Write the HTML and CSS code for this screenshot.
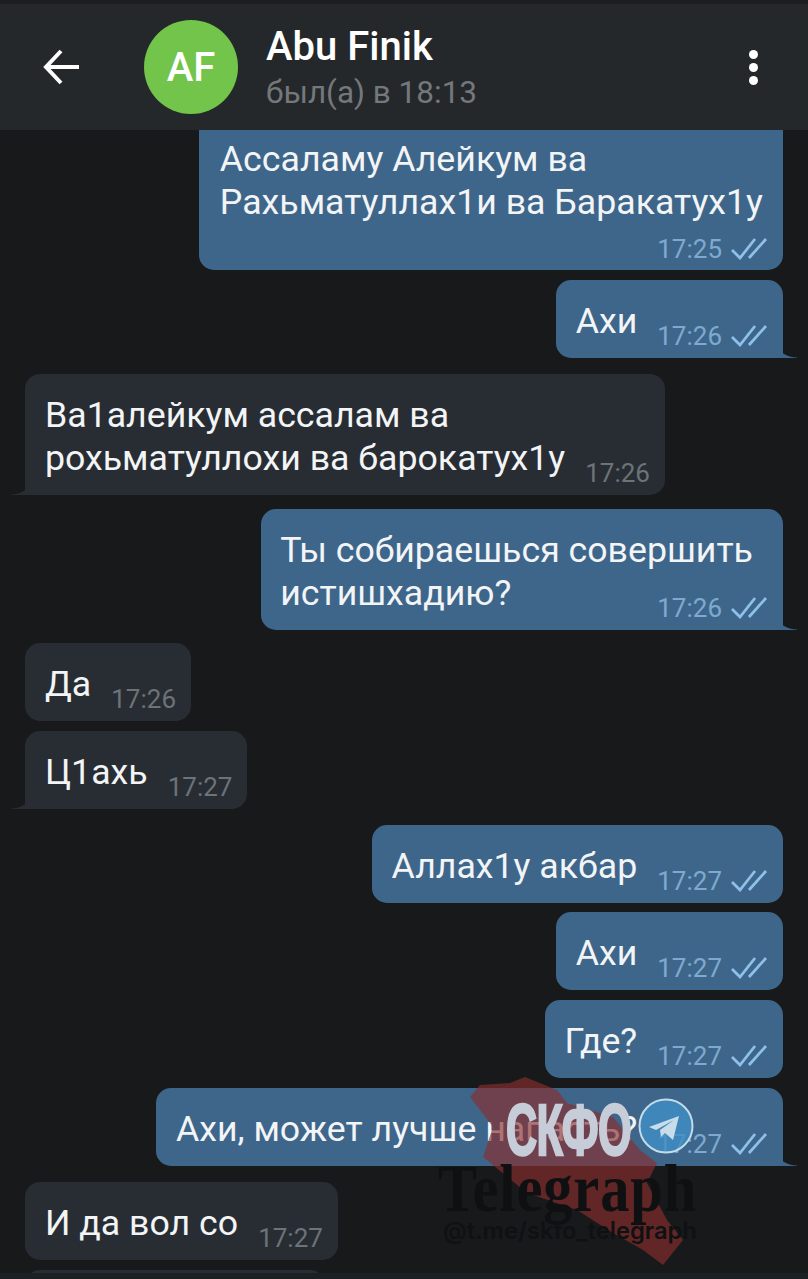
FILE: index.html
```html
<!DOCTYPE html>
<html lang="ru">
<head>
    <meta charset="UTF-8">
    <meta name="viewport" content="width=device-width, initial-scale=1.0">
    <title>Abu Finik</title>
    <link rel="stylesheet" href="styles.css">
</head>
<body>
    <div class="screen">
        <header class="topbar">
            <svg class="back" width="38" height="38" viewBox="0 0 38 38"><path d="M36 19H4M18 3 3 19l15 16" fill="none" stroke="#fff" stroke-width="4"/></svg>
            <div class="avatar">AF</div>
            <div class="peer">
                <div class="peer-name">Abu Finik</div>
                <div class="peer-status">был(а) в 18:13</div>
            </div>
            <div class="more"><span></span><span></span><span></span></div>
        </header>

        <main class="chat">
            <div class="msg out first">
                <div class="bubble bubble-column">
                    <p class="text">Ассаламу Алейкум ва<br>Рахьматуллах1и ва Баракатух1у</p>
                    <div class="meta">17:25 <svg class="ticks"><use href="#ticks"/></svg></div>
                </div>
            </div>
            <div class="msg out near">
                <div class="bubble tail">
                    <p class="text">Ахи</p>
                    <div class="meta">17:26 <svg class="ticks"><use href="#ticks"/></svg></div>
                </div>
            </div>
            <div class="msg in">
                <div class="bubble tail">
                    <p class="text">Ва1алейкум ассалам ва<br>рохьматуллохи ва барокатух1у</p>
                    <div class="meta">17:26</div>
                </div>
            </div>
            <div class="msg out tight">
                <div class="bubble tail bubble-stack">
                    <p class="text">Ты собираешься совершить<br>истишхадию?</p>
                    <div class="meta">17:26 <svg class="ticks"><use href="#ticks"/></svg></div>
                </div>
            </div>
            <div class="msg in tighter">
                <div class="bubble">
                    <p class="text">Да</p>
                    <div class="meta">17:26</div>
                </div>
            </div>
            <div class="msg in near">
                <div class="bubble tail">
                    <p class="text">Ц1ахь</p>
                    <div class="meta">17:27</div>
                </div>
            </div>
            <div class="msg out">
                <div class="bubble">
                    <p class="text">Аллах1у акбар</p>
                    <div class="meta">17:27 <svg class="ticks"><use href="#ticks"/></svg></div>
                </div>
            </div>
            <div class="msg out closest">
                <div class="bubble">
                    <p class="text">Ахи</p>
                    <div class="meta">17:27 <svg class="ticks"><use href="#ticks"/></svg></div>
                </div>
            </div>
            <div class="msg out near">
                <div class="bubble">
                    <p class="text">Где?</p>
                    <div class="meta">17:27 <svg class="ticks"><use href="#ticks"/></svg></div>
                </div>
            </div>
            <div class="msg out near">
                <div class="bubble tail">
                    <p class="text">Ахи, может лучше напасть?</p>
                    <div class="meta">17:27 <svg class="ticks"><use href="#ticks"/></svg></div>
                </div>
            </div>
            <div class="msg in">
                <div class="bubble">
                    <p class="text">И да вол со</p>
                    <div class="meta">17:27</div>
                </div>
            </div>
            <div class="msg in near">
                <div class="bubble bubble-cut"></div>
            </div>
        </main>

        <!-- водяной знак поверх переписки -->
        <div class="watermark">
            <svg class="wm-map" width="240" height="190" viewBox="0 0 240 190"><path d="M81 1 113 14 123 27 169 41 196 74 213 87 203 107 223 144 239 164 219 189 199 174 169 157 133 134 83 117 39 81 49 51 26 21 36 9 66 7Z" fill="#8a2e2e" fill-opacity=".65"/></svg>
            <div class="wm-title">СКФО</div>
            <svg class="wm-tg" width="56" height="56" viewBox="0 0 56 56"><circle cx="28" cy="28" r="26.5" fill="#3f8fc4" fill-opacity=".82" stroke="#c4dbe9" stroke-width="2"/><path d="M11 29 41 18 35 42 27 35 23 39 22 32 36 22 18 32Z" fill="#c9dcea"/></svg>
            <div class="wm-brand">Telegraph</div>
            <div class="wm-link">@t.me/skfo_telegraph</div>
        </div>

        <div class="bottom-strip"></div>
    </div>

    <svg width="0" height="0" class="defs">
        <symbol id="ticks" viewBox="0 0 36 22">
            <path d="M1 12 9 20 24 1M18 20 35 1" fill="none" stroke="#8fc0ea" stroke-width="2.8"/>
        </symbol>
    </svg>
</body>
</html>
```

FILE: styles.css
```css
* {
    margin: 0;
    padding: 0;
    box-sizing: border-box;
    font-family: Roboto, 'Liberation Sans', sans-serif;
}

body {
    background: #17191b;
}

.screen {
    position: relative;
    width: 808px;
    height: 1279px;
    overflow: hidden;
    background: #17191b;
}

.defs {
    position: absolute;
}

/* шапка */
.topbar {
    position: relative;
    z-index: 2;
    height: 130px;
    border-top: 4px solid #1c1e21;
    padding-right: 50px;
    background: #25282b;
    display: flex;
    align-items: center;
}

.back {
    margin-left: 43px;
    margin-right: 63px;
}

.avatar {
    width: 94px;
    height: 94px;
    border-radius: 50%;
    background: #73c44a;
    color: #fff;
    font-size: 40px;
    font-weight: 500;
    display: flex;
    align-items: center;
    justify-content: center;
}

.peer {
    margin-left: 28px;
    margin-top: 5px;
    flex: 1;
}

.peer-name {
    color: #fff;
    font-size: 40px;
    font-weight: 500;
    line-height: 46px;
}

.peer-status {
    color: #74787c;
    font-size: 31.5px;
    line-height: 46px;
}

.more {
    display: flex;
    flex-direction: column;
    gap: 4px;
}

.more span {
    width: 9px;
    height: 9px;
    border-radius: 50%;
    background: #fff;
}

/* сообщения */
.chat {
    display: flex;
    flex-direction: column;
    padding: 0 25px;
}

.msg {
    display: flex;
    margin-top: 16px;
}

.msg.tight {
    margin-top: 14px;
}

.msg.tighter {
    margin-top: 13px;
}

.msg.near {
    margin-top: 10px;
}

.msg.closest {
    margin-top: 9px;
}

.msg.first {
    margin-top: 0;
}

.msg.out {
    justify-content: flex-end;
}

.bubble {
    position: relative;
    display: flex;
    align-items: flex-end;
    gap: 20px;
    padding: 20px 15px 15px 20px;
    border-radius: 15px;
    color: #f2f4f6;
}

.msg.out .bubble {
    background: #3e668b;
    padding-right: 16px;
}

.msg.in .bubble {
    background: #282d33;
}

.text {
    font-size: 35.7px;
    line-height: 43px;
    white-space: nowrap;
}

.meta {
    display: flex;
    align-items: center;
    gap: 9px;
    font-size: 26px;
    line-height: 30px;
    margin-bottom: -8px;
    white-space: nowrap;
}

.msg.out .meta {
    color: #7faad0;
}

.msg.in .meta {
    color: #6c7379;
}

.ticks {
    width: 36px;
    height: 22px;
}

/* первое сообщение уходит под шапку */
.msg.out .bubble-column {
    flex-direction: column;
    gap: 0;
    padding: 8px 20px 6px 21px;
    border-radius: 0 0 15px 15px;
}

.bubble-column .meta {
    margin-top: 10px;
    margin-right: -4px;
    margin-bottom: 0;
}

.msg.out .bubble-stack {
    display: grid;
    padding-left: 19px;
}

.bubble-stack .text,
.bubble-stack .meta {
    grid-area: 1 / 1;
}

.bubble-stack .text {
    padding-right: 14px;
}

.bubble-stack .meta {
    justify-self: end;
    align-self: end;
}

.bubble-cut {
    width: 300px;
    height: 40px;
}

/* хвостик пузыря */
.bubble.tail::after {
    content: "";
    position: absolute;
    bottom: 0;
    width: 14px;
    height: 26px;
}

.msg.out .bubble.tail {
    border-bottom-right-radius: 0;
}

.msg.out .bubble.tail::after {
    right: -14px;
    background: radial-gradient(circle at 100% 0, transparent 25px, #3e668b 26px);
}

.msg.in .bubble.tail {
    border-bottom-left-radius: 0;
}

.msg.in .bubble.tail::after {
    left: -14px;
    background: radial-gradient(circle at 0 0, transparent 25px, #282d33 26px);
}

/* водяной знак */
.watermark {
    position: absolute;
    left: 430px;
    top: 1075px;
    width: 280px;
    height: 200px;
}

.wm-map {
    position: absolute;
    left: 14px;
    top: 1px;
}

.wm-title {
    position: absolute;
    left: 76px;
    top: 19px;
    color: #c6cdd8;
    font-family: 'Liberation Sans', sans-serif;
    font-size: 72px;
    font-weight: 700;
    line-height: 72px;
    letter-spacing: -1px;
    white-space: nowrap;
    transform: scaleX(0.6);
    transform-origin: left center;
    -webkit-text-stroke: 2.5px #c6cdd8;
}

.wm-tg {
    position: absolute;
    left: 208px;
    top: 23px;
}

.wm-brand {
    position: absolute;
    left: 8px;
    top: 78px;
    color: #0f1012;
    font-family: 'Liberation Serif', serif;
    font-size: 68px;
    font-weight: 700;
    line-height: 70px;
    letter-spacing: 1px;
    transform: scaleX(0.86);
    transform-origin: left center;
}

.wm-link {
    position: absolute;
    left: 13px;
    top: 142px;
    color: #0f1113;
    font-family: Inter, sans-serif;
    font-size: 23.7px;
    font-weight: 600;
    line-height: 28px;
    white-space: nowrap;
}

.bottom-strip {
    position: absolute;
    left: 0;
    right: 0;
    bottom: 0;
    height: 6px;
    background: #1b2122;
}
```
